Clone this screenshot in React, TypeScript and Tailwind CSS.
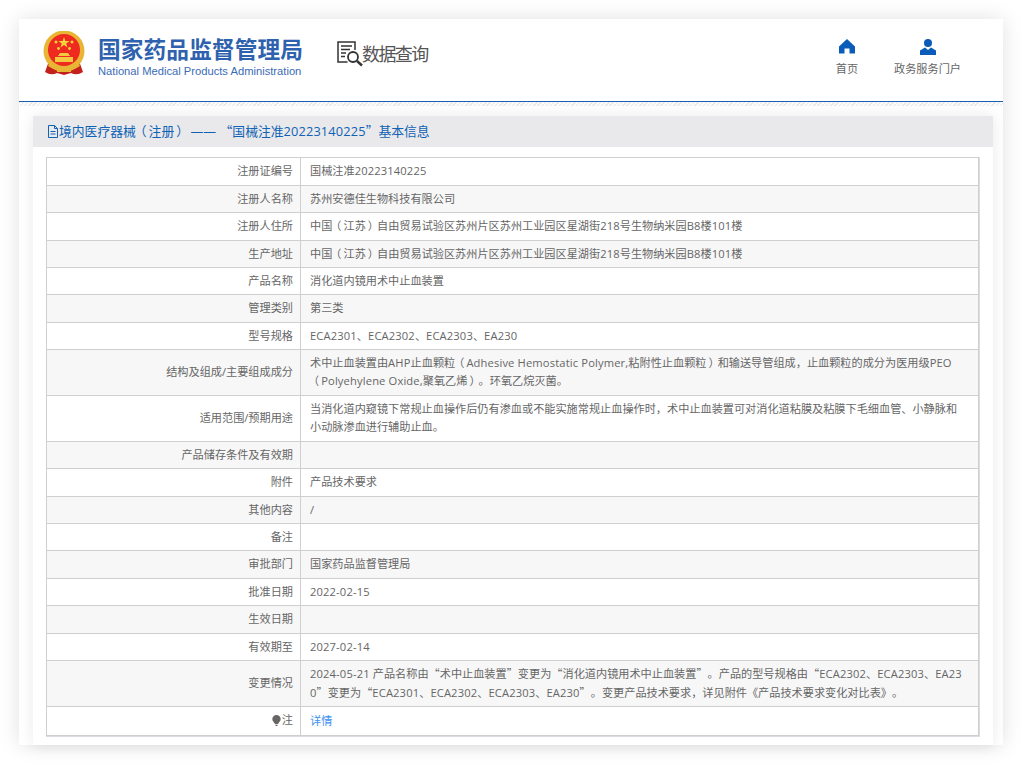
import { Fragment } from "react";

const rows: [string, string, number][] = [
  ["注册证编号", "国械注准20223140225", 28],
  ["注册人名称", "苏州安德佳生物科技有限公司", 27],
  ["注册人住所", "中国（江苏）自由贸易试验区苏州片区苏州工业园区星湖街218号生物纳米园B8楼101楼", 28],
  ["生产地址", "中国（江苏）自由贸易试验区苏州片区苏州工业园区星湖街218号生物纳米园B8楼101楼", 27],
  ["产品名称", "消化道内镜用术中止血装置", 27],
  ["管理类别", "第三类", 28],
  ["型号规格", "ECA2301、ECA2302、ECA2303、EA230", 27],
  ["结构及组成/主要组成成分", "术中止血装置由AHP止血颗粒（Adhesive Hemostatic Polymer,粘附性止血颗粒）和输送导管组成，止血颗粒的成分为医用级PEO\n（Polyehylene Oxide,聚氧乙烯）。环氧乙烷灭菌。", 46],
  ["适用范围/预期用途", "当消化道内窥镜下常规止血操作后仍有渗血或不能实施常规止血操作时，术中止血装置可对消化道粘膜及粘膜下毛细血管、小静脉和\n小动脉渗血进行辅助止血。", 46],
  ["产品储存条件及有效期", "", 27],
  ["附件", "产品技术要求", 28],
  ["其他内容", "/", 27],
  ["备注", "", 27],
  ["审批部门", "国家药品监督管理局", 28],
  ["批准日期", "2022-02-15", 27],
  ["生效日期", "", 28],
  ["有效期至", "2027-02-14", 27],
  ["变更情况", "2024-05-21 产品名称由“术中止血装置”变更为“消化道内镜用术中止血装置”。产品的型号规格由“ECA2302、ECA2303、EA23\n0”变更为“ECA2301、ECA2302、ECA2303、EA230”。变更产品技术要求，详见附件《产品技术要求变化对比表》。", 46],
];

function Rich({ text }: { text: string }) {
  return (
    <>
      {text.split(/([“”（）]|[A-Za-z0-9 ,\-]+)/).map((part, i) => {
        if (!part) return null;
        if (part === "“" || part === "”")
          return <span key={i} className="font-['Noto_Sans_CJK_SC',sans-serif]">{part}</span>;
        if (part === "（")
          return <span key={i} className="ml-[-2px] mr-[2px]">{part}</span>;
        if (part === "）")
          return <span key={i} className="ml-[2px] mr-[-2px]">{part}</span>;
        if (/^[A-Za-z0-9 ,\-]+$/.test(part))
          return <span key={i} className="tracking-[0.15px]">{part}</span>;
        return <Fragment key={i}>{part}</Fragment>;
      })}
    </>
  );
}

function Emblem() {
  return (
    <svg width="42" height="45" viewBox="0 0 42 45" className="shrink-0">
      <path d="M6 30 L2 41 Q8 45 14 42 L21 44 L28 42 Q34 45 40 41 L36 30 Z" fill="#c4201c" />
      <circle cx="21" cy="20" r="20.5" fill="#e9b534" />
      <circle cx="21" cy="19" r="16" fill="#ee2a20" />
      <path d="M21 6 l1.4 4 h4.2 l-3.4 2.5 1.3 4 -3.5-2.5 -3.5 2.5 1.3-4 -3.4-2.5 h4.2z" fill="#f6d13c" />
      <circle cx="13" cy="11" r="1.5" fill="#f6d13c" />
      <circle cx="29" cy="11" r="1.5" fill="#f6d13c" />
      <circle cx="15.5" cy="17.5" r="1.4" fill="#f6d13c" />
      <circle cx="26.5" cy="17.5" r="1.4" fill="#f6d13c" />
      <path d="M17 22 h8 l2 3 h-12z M12 26 h18 v5 H12z" fill="#f3c93f" />
      <path d="M7 31 Q21 42 35 31 L37 35 Q21 46 5 35Z" fill="#e9b534" />
      <path d="M14 37.5 h14 v3.5 H14z" fill="#e9b534" />
    </svg>
  );
}

function SearchDoc() {
  return (
    <svg width="26" height="26" viewBox="0 0 26 26" fill="none" stroke="#333" className="shrink-0">
      <path d="M10.5 21 H1 V1 H18 V9" strokeWidth="1.5" />
      <path d="M4 5 H15 M4 8.5 H13 M4 12 H9 M4 15.5 H8" strokeWidth="1.4" />
      <circle cx="16" cy="16" r="5" strokeWidth="1.8" />
      <path d="M20 20 L25 24.5" strokeWidth="2.4" />
    </svg>
  );
}

export default function App() {
  return (
    <div className="h-[765px] overflow-hidden bg-white px-[19px] pt-[19px] font-['Open_Sans','Noto_Sans_CJK_SC',sans-serif] text-[11.17px] text-[#666] [text-spacing-trim:space-all]">
      <div className="h-[726px] w-[984px] bg-white shadow-[0_0_20px_rgba(0,0,0,0.12)]">
        <header className="flex h-[83px] items-start border-b border-[#1a5fb0]">
          <div className="ml-[24px] mt-[12px]"><Emblem /></div>
          <div className="ml-[13px] mt-[17px] w-[210px]">
            <div className="text-[22.7px] font-bold leading-[28px] tracking-[0.1px] whitespace-nowrap text-[#2f62ae]">国家药品监督管理局</div>
            <div className="font-['Liberation_Sans',sans-serif] text-[11.2px] leading-[14px] whitespace-nowrap text-[#3a6cb5]">National Medical Products Administration</div>
          </div>
          <div className="ml-[29px] mt-[22px] flex items-center">
            <SearchDoc />
            <span className="-ml-[1px] -mt-[1px] text-[18px] leading-[24px] tracking-[-1.6px] text-[#555]">数据查询</span>
          </div>
          <nav className="ml-auto mr-[42px] mt-[20px] flex gap-[35px]">
            <div className="flex w-[24px] flex-col items-center">
              <svg width="16" height="15" viewBox="0 0 16 15" fill="#0a5cb8">
                <path d="M8 0 L16 7.5 V14.5 H10.5 V9.5 H5.5 V14.5 H0 V7.5 Z" />
              </svg>
              <span className="mt-[7px] leading-[16px] whitespace-nowrap">首页</span>
            </div>
            <div className="flex w-[67px] flex-col items-center">
              <svg width="16" height="16" viewBox="0 0 16 16" fill="#0a5cb8">
                <circle cx="8" cy="4" r="4" />
                <path d="M5 8.5 L8 11 L11 8.5 L16 11.5 V16 H0 V11.5 Z" />
              </svg>
              <span className="mt-[6px] leading-[16px] whitespace-nowrap">政务服务门户</span>
            </div>
          </nav>
        </header>
        <div className="h-[4px] bg-[repeating-linear-gradient(135deg,#e8e8e8_0,#e8e8e8_1px,#fbfbfb_1px,#fbfbfb_3px)]" />
        <section className="ml-[14px] mt-[10px] h-[629px] w-[960px] bg-white shadow-[0_0_14px_rgba(0,0,0,0.09)]">
          <h1 className="flex h-[31px] items-center bg-[#e9e9eb] pl-[14px] text-[12.8px] font-normal text-[#0f62b5]">
            <svg width="12" height="13" viewBox="0 0 12 13" fill="none" stroke="#0f62b5" className="shrink-0">
              <path d="M1.5 .5 H7.5 L10.5 3.5 V12.5 H1.5 Z M7.5 .5 V3.5 H10.5 M3.5 6.5 H8.5 M3.5 9 H8.5" />
            </svg>
            <span className="whitespace-nowrap"><Rich text="境内医疗器械（注册） —— “国械注准20223140225”基本信息" /></span>
          </h1>
          <div className="pl-[13px] pt-[10px]">
            <div className="w-[934px] border-r border-b border-[#dcdce2]">
              <table className="w-[933px] table-fixed border-collapse border border-[#cfcfcf] leading-[18px]">
                <tbody>
                  {rows.map(([label, value, h], i) => (
                    <tr key={label} style={{ height: h }} className={i % 2 ? "bg-[#f7f7f7]" : "bg-white"}>
                      <td className="w-[254px] border border-[#cfcfcf] pb-[1px] pr-[7px] text-right">{label}</td>
                      <td className="border border-[#cfcfcf] pb-[1px] pl-[9px] pr-[10px]">
                        {value.split("\n").map((line) => (
                          <div key={line} className="whitespace-nowrap"><Rich text={line} /></div>
                        ))}
                      </td>
                    </tr>
                  ))}
                  <tr className="h-[29px] bg-white">
                    <td className="border border-[#cfcfcf] pr-[7px] text-right">
                      <span className="inline-flex items-center justify-end">
                        <svg width="9" height="11" viewBox="0 0 9 11" fill="#666" className="mr-[1px]">
                          <path d="M4.5 0 A4.2 4.2 0 0 1 8.7 4.2 C8.7 6 7 7 6 9 H3 C2 7 .3 6 .3 4.2 A4.2 4.2 0 0 1 4.5 0Z M3.5 9.8 H5.5 V11 H3.5Z" />
                        </svg>
                        注
                      </span>
                    </td>
                    <td className="border border-[#cfcfcf] pl-[9px] text-[#3b8ff0]">详情</td>
                  </tr>
                </tbody>
              </table>
            </div>
          </div>
        </section>
      </div>
    </div>
  );
}
